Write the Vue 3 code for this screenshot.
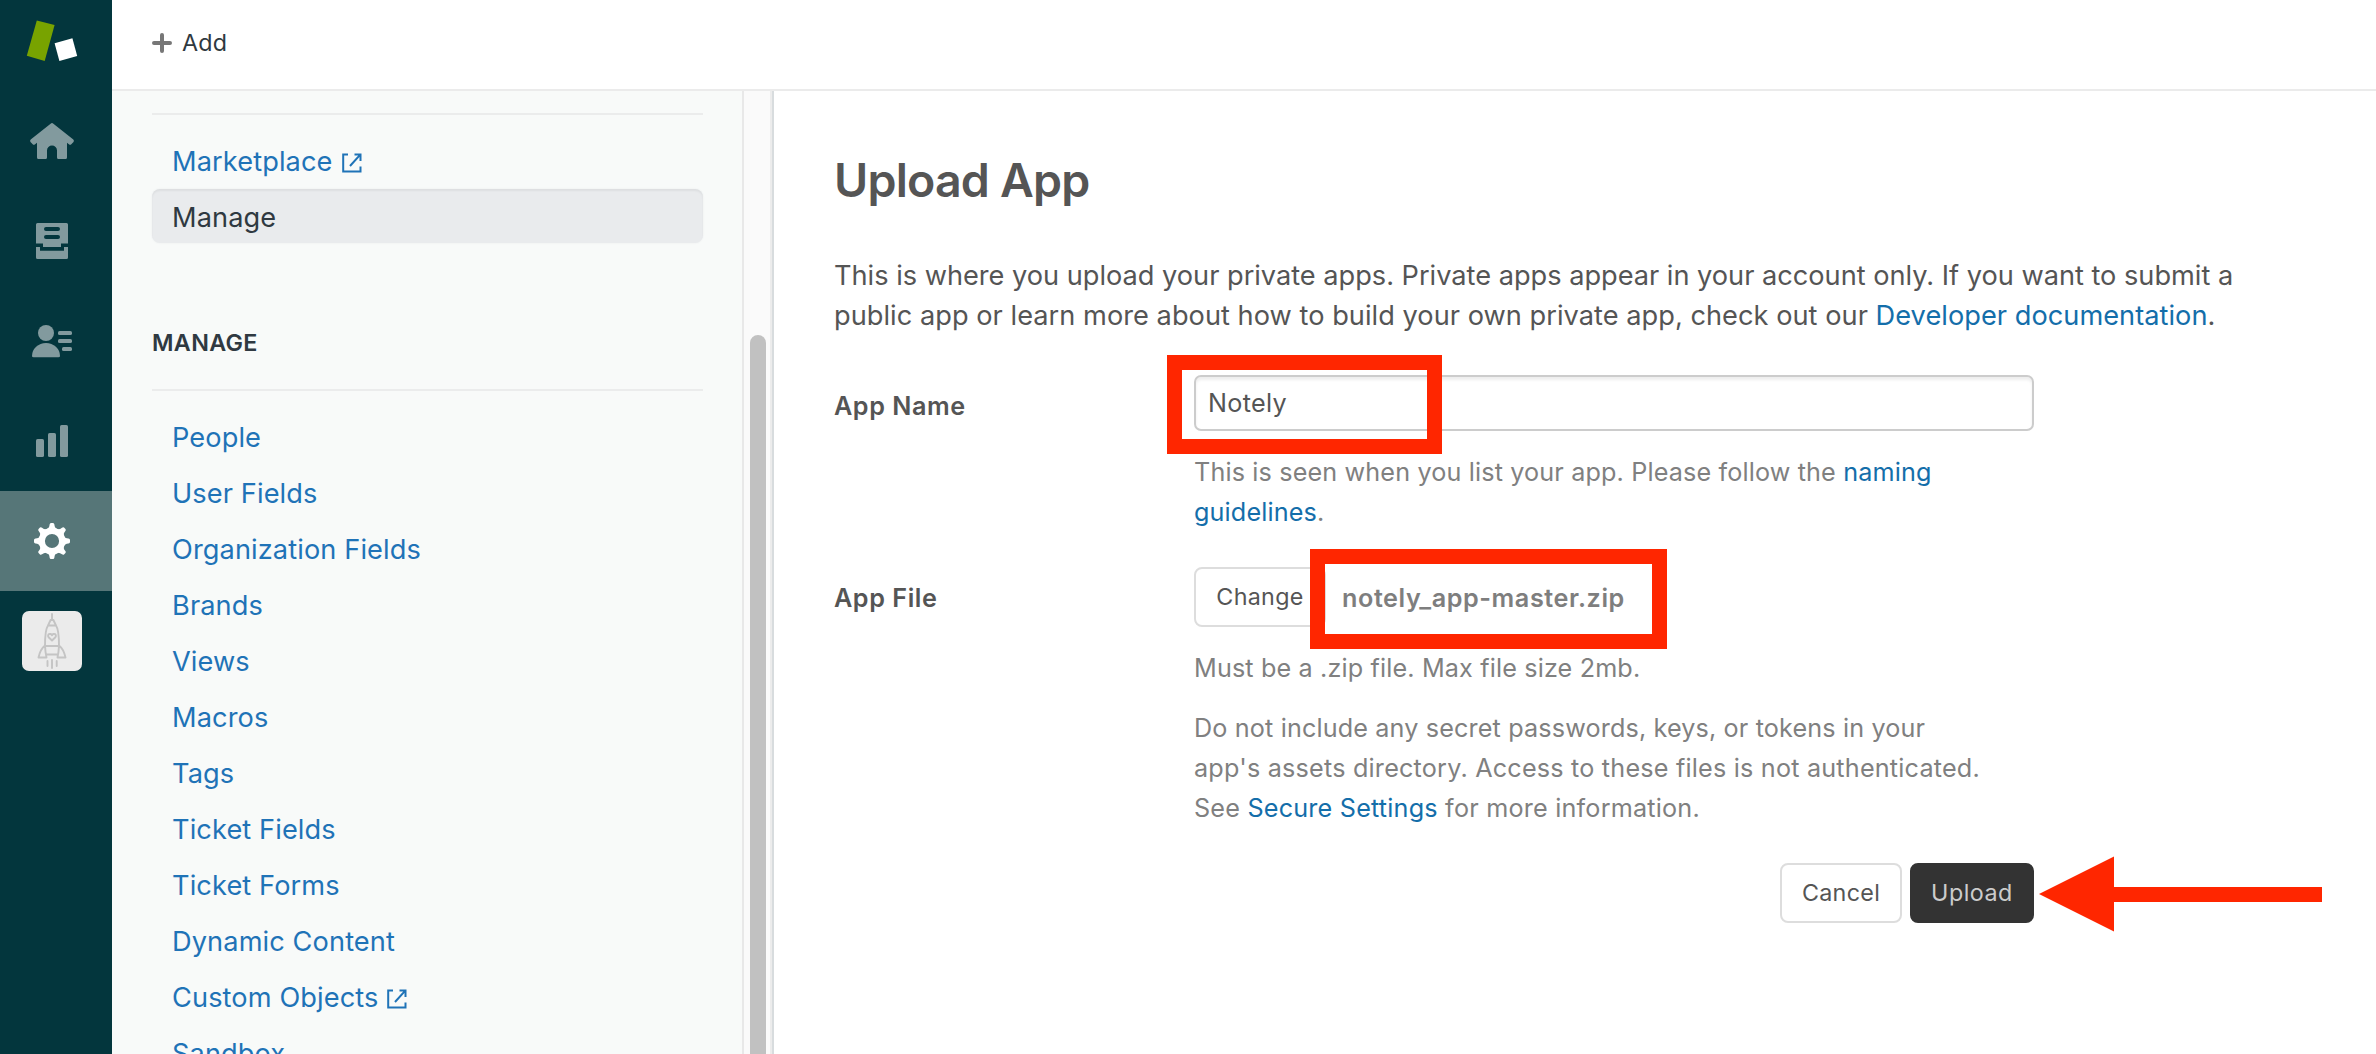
<script setup>
const apps = [
  { label: 'Marketplace', external: true },
  { label: 'Manage', active: true },
]
const manage = [
  { label: 'People' },
  { label: 'User Fields' },
  { label: 'Organization Fields' },
  { label: 'Brands' },
  { label: 'Views' },
  { label: 'Macros' },
  { label: 'Tags' },
  { label: 'Ticket Fields' },
  { label: 'Ticket Forms' },
  { label: 'Dynamic Content' },
  { label: 'Custom Objects', external: true },
  { label: 'Sandbox' },
]
const teeth = [0, 45, 90, 135, 180, 225, 270, 315]
</script>

<template>
  <div class="page">
    <aside class="rail">
      <svg width="112" height="91" viewBox="0 0 112 91">
        <path fill="#78a300" d="M36.8 20.5 54.6 25 44.7 61 26.8 55.8Z" />
        <path fill="#fff" d="M54.6 43.2 72.4 38.2 77.2 56 59.4 61Z" />
      </svg>
      <svg class="cell" viewBox="0 0 112 100">
        <path d="M50.6 32.7Q52 31.5 53.4 32.7L73.3 48.6Q74.5 49.7 73.5 50.9L71.3 53.3Q70.3 54.3 69.2 53.4L67 51.8V66.5Q67 68 65.5 68H58.5Q57 68 57 66.5V59.5A5 5 0 0 0 47 59.5V66.5Q47 68 45.5 68H38.5Q37 68 37 66.5V51.8L34.8 53.4Q33.7 54.3 32.7 53.3L30.5 50.9Q29.5 49.7 30.7 48.6Z" />
      </svg>
      <svg class="cell" viewBox="0 0 112 100">
        <path fill-rule="evenodd" d="M37.5 32H66.5Q68 32 68 33.5V52.4H61V56H43V52.4H36V33.5Q36 32 37.5 32ZM46 36A2 2 0 0 0 46 40H58A2 2 0 0 0 58 36ZM46 44A2 2 0 0 0 46 48H58A2 2 0 0 0 58 44Z" />
        <path d="M36 56H40V59.7H64V56H68V66.5Q68 68 66.5 68H37.5Q36 68 36 66.5Z" />
      </svg>
      <svg class="cell" viewBox="0 0 112 100">
        <circle cx="46" cy="42" r="8" />
        <path d="M32 65A14 13 0 0 1 60 65Q60 66.3 58.5 66.3H33.5Q32 66.3 32 65Z" />
        <rect x="58" y="40" width="14" height="4" rx="1.6" />
        <rect x="58" y="48" width="14" height="4" rx="1.6" />
        <rect x="62" y="56" width="10" height="4" rx="1.6" />
      </svg>
      <svg class="cell" viewBox="0 0 112 100">
        <rect x="36" y="48" width="8" height="18" rx="1.6" />
        <rect x="48" y="42" width="8" height="24" rx="1.6" />
        <rect x="60" y="34" width="8" height="32" rx="1.6" />
      </svg>
      <svg class="cell active" viewBox="0 0 112 100">
        <circle cx="52" cy="50" r="10.2" fill="none" stroke="#fff" stroke-width="6.2" />
        <path
          v-for="t in teeth"
          :key="t"
          :transform="`rotate(${t} 52 50)`"
          d="M46.5 38.3Q49.4 37.3 49.6 33.5Q49.8 32 51 32H53Q54.2 32 54.4 33.5Q54.6 37.3 57.5 38.3V40H46.5Z"
        />
      </svg>
      <svg class="cell" viewBox="0 0 112 100">
        <rect x="22" y="20" width="60" height="60" rx="7" fill="#ebebeb" />
        <g fill="none" stroke="#c4c4c4" stroke-width="1.9" stroke-linejoin="round" stroke-linecap="round">
          <path d="M52 23V29M50.6 29H53.4L56 34.5H48ZM48 34.5C45.5 38 45 43 45 55H59C59 43 58.5 38 56 34.5" />
          <path d="M52 49.5 48.6 46.2C46.8 43.6 50.3 41.4 52 44.2C53.7 41.4 57.2 43.6 55.4 46.2Z" />
          <path d="M45 54.5C41 57.5 39.5 62 38.5 66.5H46.5C45.5 62.5 45.2 58.5 45 54.5ZM59 54.5C63 57.5 64.5 62 65.5 66.5H57.5C58.5 62.5 58.8 58.5 59 54.5ZM46 63.5H58" />
          <path d="M47.5 70V75M52 69V77M56.7 70V75" />
        </g>
      </svg>
    </aside>

    <div class="body">
      <header class="topbar">
        <svg width="20" height="20" viewBox="0 0 20 20">
          <path d="M10 2V18M2 10H18" fill="none" stroke="#777" stroke-width="4" stroke-linecap="round" />
        </svg>
        <span>Add</span>
      </header>

      <div class="columns">
        <nav class="side">
          <hr />
          <ul>
            <li v-for="i in apps" :key="i.label" :class="{ on: i.active }">
              <a>{{ i.label }}</a>
              <svg v-if="i.external" class="ext" viewBox="0 0 20 20">
                <path d="M6 1.5H1.2V18.5H18.5V13.5M8 13 18.3 1.7M12.5 1.5H18.5V8" />
              </svg>
            </li>
          </ul>
          <h2>MANAGE</h2>
          <hr />
          <ul>
            <li v-for="i in manage" :key="i.label">
              <a>{{ i.label }}</a>
              <svg v-if="i.external" class="ext" viewBox="0 0 20 20">
                <path d="M6 1.5H1.2V18.5H18.5V13.5M8 13 18.3 1.7M12.5 1.5H18.5V8" />
              </svg>
            </li>
          </ul>
        </nav>
        <div class="scroller"><div class="thumb"></div></div>

        <main class="main">
          <h1>Upload App</h1>
          <p class="intro">
            This is where you upload your private apps. Private apps appear in your account only. If you want to submit a<br />
            <span class="l2">public app or learn more about how to build your own private app, check out our <a>Developer documentation</a>.</span>
          </p>

          <div class="row name-row">
            <label>App Name</label>
            <div class="field">
              <div class="input">Notely</div>
              <p class="hint">This is seen when you list your app. Please follow the <a>naming<br />guidelines</a>.</p>
            </div>
          </div>

          <div class="row file-row">
            <label>App File</label>
            <div class="field">
              <div class="file">
                <button class="btn change">Change</button>
                <strong>notely_app-master.zip</strong>
              </div>
              <p class="hint">Must be a .zip file. Max file size 2mb.</p>
              <p class="hint second-hint">
                Do not include any secret passwords, keys, or tokens in your<br />
                <span class="wide">app's assets directory. Access to these files is not authenticated.<br />
                See <a>Secure Settings</a> for more information.</span>
              </p>
            </div>
          </div>

          <div class="actions">
            <button class="btn cancel">Cancel</button>
            <button class="btn upload">Upload</button>
          </div>
        </main>
      </div>
    </div>

    <div class="mark mark-name"></div>
    <div class="mark mark-file"></div>
    <svg class="arrow" width="283" height="76" viewBox="0 0 283 76">
      <path fill="#ff2600" d="M0 38 75 .6V31H283V46H75V75.4Z" />
    </svg>
  </div>
</template>

<style>
body {
  overflow: hidden;
}
</style>

<style scoped>
.page {
  position: relative;
  display: flex;
  width: 2376px;
  height: 1054px;
  overflow: hidden;
  background: #fff;
  font-family: Inter, "Liberation Sans", sans-serif;
  color: #555;
}
.rail {
  flex: none;
  display: flex;
  flex-direction: column;
  width: 112px;
  background: #03363d;
}
.cell {
  width: 112px;
  height: 100px;
  fill: #829a9e;
}
.cell.active {
  background: #567678;
  fill: #fff;
}
.body {
  flex: 1;
  display: flex;
  flex-direction: column;
  min-width: 0;
}
.topbar {
  box-sizing: border-box;
  height: 91px;
  flex: none;
  display: flex;
  align-items: center;
  gap: 10px;
  padding: 0 0 4px 40px;
  border-bottom: 2px solid #ebebeb;
  font-size: 23.3px;
  line-height: 30px;
  letter-spacing: 0.2px;
  color: #2f3941;
}
.columns {
  flex: 1;
  display: flex;
  min-height: 0;
}
.side {
  flex: none;
  box-sizing: border-box;
  width: 630px;
  padding: 22px 39px 0 40px;
  background: #f8faf9;
  overflow: hidden;
}
hr {
  height: 2px;
  margin: 0;
  border: 0;
  background: #ebecec;
}
ul {
  list-style: none;
  margin: 18px 0 0;
  padding: 0;
}
li {
  display: flex;
  align-items: center;
  height: 54px;
  margin-bottom: 2px;
  padding-left: 20px;
  border-radius: 8px;
  font-size: 27.2px;
  line-height: 58px;
  letter-spacing: 0.1px;
  color: #1f73b7;
}
li.on {
  background: #e9ebed;
  box-shadow: inset 0 2px 2px rgba(0, 0, 0, 0.05), 0 0 2px #e9ebed;
  color: #2f3941;
}
li a {
  height: 54px;
}
.ext {
  width: 20px;
  height: 20px;
  margin: 5px 0 0 9px;
  fill: none;
  stroke: #1f73b7;
  stroke-width: 2;
}
h2 {
  margin: 80px 0 26px;
  font-size: 23.3px;
  line-height: 40px;
  font-weight: 600;
  letter-spacing: 0.35px;
  color: #2f3941;
}
.scroller {
  flex: none;
  box-sizing: border-box;
  width: 32px;
  padding: 244px 4px 0 6px;
  background: #fafafa;
  border-left: 2px solid #e8e8e8;
  border-right: 2px solid #d8dcde;
  box-shadow: inset -2px 0 #ececec;
  overflow: hidden;
}
.thumb {
  width: 16px;
  height: 800px;
  border-radius: 8px;
  background: #c1c1c1;
}
.main {
  flex: 1;
  padding: 59px 0 0 60px;
}
a {
  color: #146eaa;
}
li a {
  color: inherit;
}
h1 {
  margin: 0;
  font-size: 46.5px;
  line-height: 60px;
  font-weight: 600;
  letter-spacing: -0.8px;
}
p {
  margin: 0;
  white-space: nowrap;
}
.intro {
  margin-top: 46px;
  font-size: 27.2px;
  line-height: 40px;
  letter-spacing: -0.015px;
}
.l2 {
  letter-spacing: 0.03px;
}
.row {
  display: flex;
  width: 1200px;
}
.name-row {
  margin-top: 39px;
}
.file-row {
  margin-top: 35px;
}
label {
  flex: none;
  width: 360px;
  padding-top: 11px;
  font-size: 25.2px;
  line-height: 40px;
  font-weight: 600;
  letter-spacing: 0.55px;
}
.field {
  flex: 1;
}
.input {
  box-sizing: border-box;
  height: 56px;
  padding: 0 12px;
  border: 2px solid #ccc;
  border-radius: 7px;
  box-shadow: inset 0 3px 3px rgba(0, 0, 0, 0.07);
  font-size: 25.2px;
  line-height: 52px;
  letter-spacing: 0.3px;
}
.hint {
  margin-top: 21px;
  font-size: 25.2px;
  line-height: 40px;
  letter-spacing: 0.14px;
  color: #808080;
}
.second-hint {
  margin-top: 20px;
}
.wide {
  letter-spacing: 0.2px;
}
.file {
  display: flex;
  align-items: center;
}
.file strong {
  margin-left: 16px;
  padding-top: 2px;
  font-size: 25.2px;
  line-height: 40px;
  font-weight: 600;
  letter-spacing: 0.57px;
  color: #7e7e7e;
}
.btn {
  box-sizing: border-box;
  height: 60px;
  padding: 0;
  border: 2px solid #ddd;
  border-radius: 8px;
  background: #fff;
  font: 23.3px/56px Inter, "Liberation Sans", sans-serif;
  letter-spacing: 0.3px;
  color: #555;
}
.change {
  width: 132px;
}
.actions {
  display: flex;
  justify-content: flex-end;
  gap: 8px;
  width: 1200px;
  margin-top: 35px;
}
.cancel {
  width: 122px;
}
.upload {
  width: 124px;
  border-color: #333;
  background: #333;
  color: #ccc;
  letter-spacing: 0.5px;
}
.mark {
  position: absolute;
  box-sizing: border-box;
  border: 15px solid #ff2600;
}
.mark-name {
  left: 1167px;
  top: 355px;
  width: 275px;
  height: 99px;
}
.mark-file {
  left: 1310px;
  top: 549px;
  width: 357px;
  height: 100px;
}
.arrow {
  position: absolute;
  left: 2039px;
  top: 856px;
}
</style>
